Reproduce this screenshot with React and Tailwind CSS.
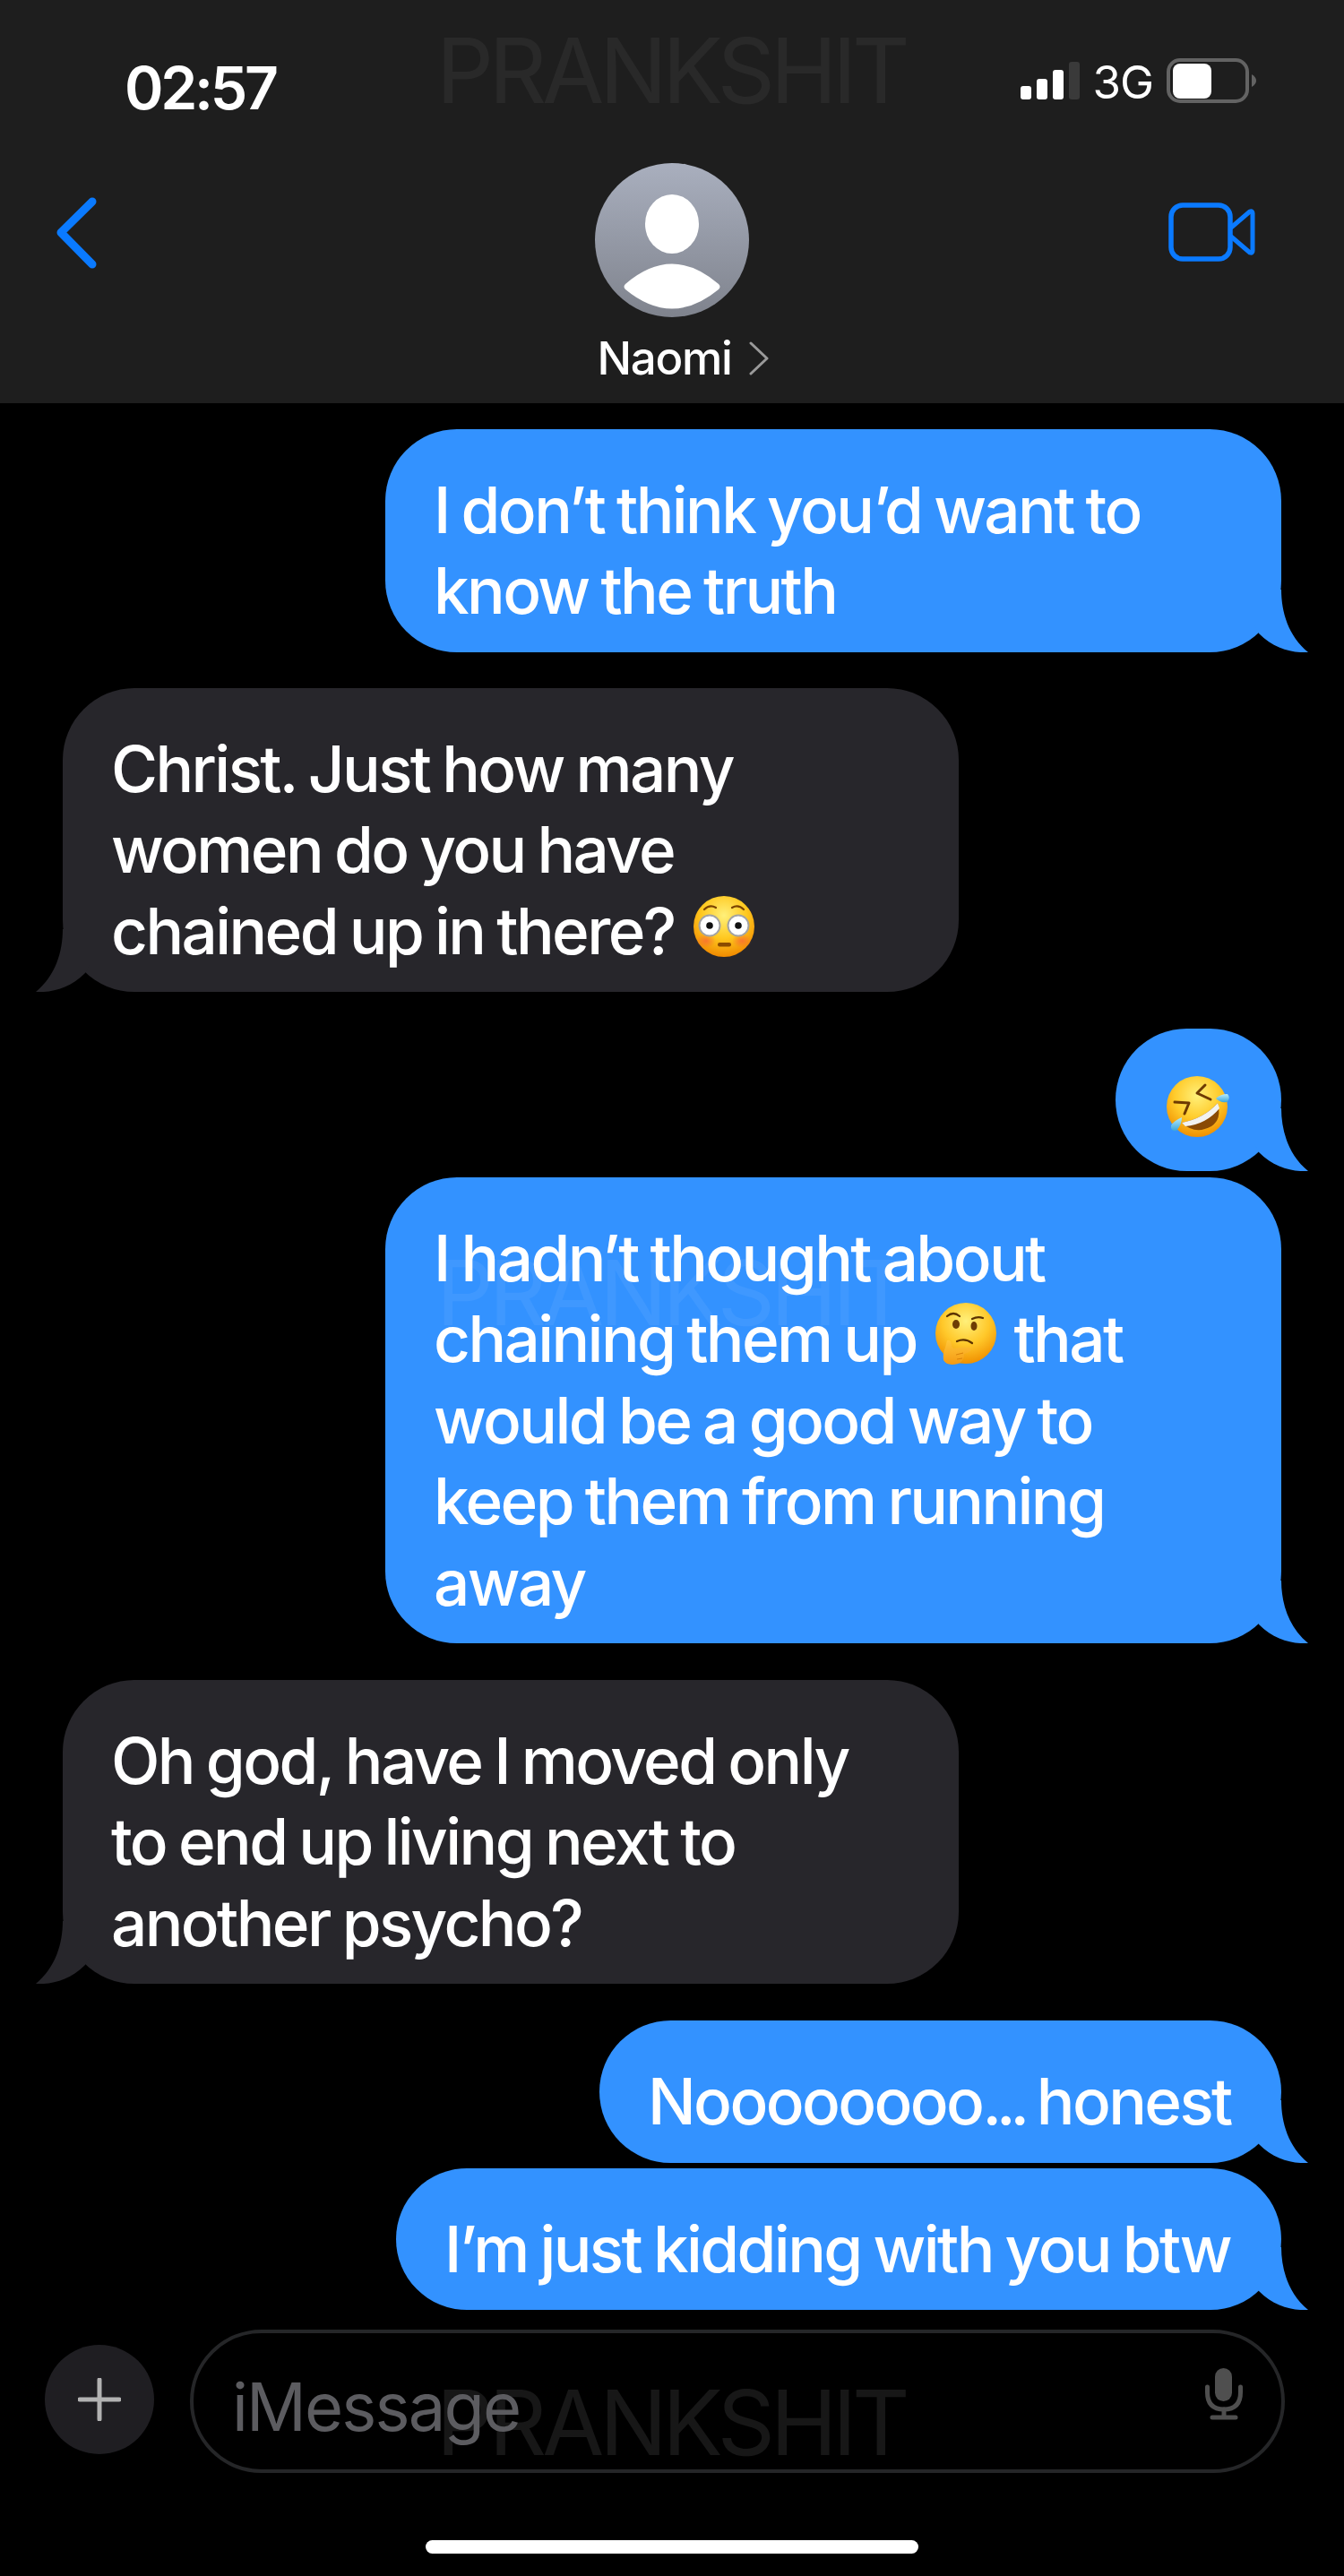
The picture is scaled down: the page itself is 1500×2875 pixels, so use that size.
const Tail = ({ color, flip }) => (
    <svg
        viewBox="0 0 60 70"
        className={`absolute bottom-0 w-[60px] h-[70px] ${flip ? 'left-[-30px] -scale-x-100' : 'right-[-30px]'}`}
    >
        <path d="M0 0 L30 0 C30 25 38 52 60 70 C42 71 22 66 5 49 L0 40 Z" fill={color} />
    </svg>
);

const Flushed = () => (
    <svg viewBox="0 0 68 68" className="inline-block w-[68px] h-[68px] ml-[8px] align-[-3px]">
        <defs>
            <radialGradient id="fl" cx="50%" cy="32%" r="68%">
                <stop offset="0" stopColor="#fff07a" />
                <stop offset="0.55" stopColor="#ffc81f" />
                <stop offset="1" stopColor="#f08a00" />
            </radialGradient>
            <radialGradient id="bl">
                <stop offset="0" stopColor="#f8603a" stopOpacity="0.7" />
                <stop offset="1" stopColor="#f8603a" stopOpacity="0" />
            </radialGradient>
        </defs>
        <circle cx="34" cy="34" r="34" fill="url(#fl)" />
        <ellipse cx="14" cy="50" rx="11" ry="8" fill="url(#bl)" />
        <ellipse cx="54" cy="50" rx="11" ry="8" fill="url(#bl)" />
        <circle cx="18" cy="33" r="11.5" fill="#fff" stroke="#a3a3a3" strokeWidth="2" />
        <circle cx="50" cy="33" r="11.5" fill="#fff" stroke="#a3a3a3" strokeWidth="2" />
        <circle cx="18" cy="33" r="3.8" fill="#111" />
        <circle cx="50" cy="33" r="3.8" fill="#111" />
        <path d="M12 15 Q18 9 25 13" fill="none" stroke="#7a4200" strokeWidth="2.2" strokeLinecap="round" />
        <path d="M43 13 Q50 9 56 15" fill="none" stroke="#7a4200" strokeWidth="2.2" strokeLinecap="round" />
        <rect x="27" y="52" width="15" height="4.5" rx="2.2" fill="#8a4b00" />
    </svg>
);

const Rofl = () => (
    <svg viewBox="0 0 70 68" className="w-[70px] h-[68px]">
        <defs>
            <radialGradient id="ro" cx="50%" cy="32%" r="68%">
                <stop offset="0" stopColor="#fff07a" />
                <stop offset="0.55" stopColor="#ffcb2b" />
                <stop offset="1" stopColor="#f09000" />
            </radialGradient>
            <linearGradient id="tear" x1="0" y1="0" x2="0" y2="1">
                <stop offset="0" stopColor="#b8ecfb" />
                <stop offset="1" stopColor="#3aa5dc" />
            </linearGradient>
        </defs>
        <circle cx="34" cy="34" r="34" fill="url(#ro)" />
        <path d="M17 52 Q42 47 57 30 Q62 48 50 56 Q32 66 17 52 Z" fill="#8a4a05" />
        <path d="M17 52 Q42 47 57 30 L59 36 Q44 54 21 56 Z" fill="#f2f2f2" />
        <path d="M9 29 L25 30 L20 42" fill="none" stroke="#6e3a02" strokeWidth="3" strokeLinecap="round" strokeLinejoin="round" />
        <path d="M43 10 L34 19 L49 26" fill="none" stroke="#6e3a02" strokeWidth="3" strokeLinecap="round" strokeLinejoin="round" />
        <path d="M55 25 Q60 20 68 20 Q72 25 67 29 Q60 30 55 25 Z" fill="url(#tear)" />
        <path d="M17 46 Q17 54 11 61 Q4 62 5 55 Q8 50 17 46 Z" fill="url(#tear)" />
    </svg>
);

const Thinking = () => (
    <svg viewBox="0 0 70 72" className="inline-block w-[70px] h-[72px] ml-[6px] mr-[5px] align-[-6px]">
        <defs>
            <radialGradient id="th" cx="50%" cy="30%" r="70%">
                <stop offset="0" stopColor="#fff07a" />
                <stop offset="0.55" stopColor="#ffc82a" />
                <stop offset="1" stopColor="#f09000" />
            </radialGradient>
            <linearGradient id="hand" x1="0" y1="0" x2="0" y2="1">
                <stop offset="0" stopColor="#ffc63a" />
                <stop offset="1" stopColor="#f59a12" />
            </linearGradient>
        </defs>
        <circle cx="35" cy="34" r="34" fill="url(#th)" />
        <path d="M14 15 Q21 9 28 15" fill="none" stroke="#5c3200" strokeWidth="2.2" strokeLinecap="round" />
        <path d="M42 18 Q48 15 54 17" fill="none" stroke="#5c3200" strokeWidth="2.2" strokeLinecap="round" />
        <ellipse cx="24" cy="24" rx="4" ry="5" fill="#6e3d04" />
        <ellipse cx="44" cy="26" rx="3.5" ry="5" fill="#6e3d04" />
        <path d="M25 43 Q34 39 42 45" fill="none" stroke="#5c3200" strokeWidth="2.2" strokeLinecap="round" />
        <path d="M14 42 Q18 41 19 47 Q19 50 22 51 Q32 49 40 50 Q42 54 36 56 L33 57 Q33 66 26 68 Q14 71 10 64 Q9 56 12 50 Z" fill="url(#hand)" />
        <path d="M24 58 L32 56 M25 63 L31 62" stroke="#d9820a" strokeWidth="1" fill="none" />
    </svg>
);

const Watermark = ({ className }) => (
    <div className={`absolute left-[487px] z-[5] text-[100px] leading-[72px] font-normal tracking-[-0.05em] whitespace-nowrap pointer-events-none ${className}`}>
        PRANKSHIT
    </div>
);

const Bubble = ({ lines, mine, width, className = '' }) => {
    const color = mine ? '#3392ff' : '#27262b';
    return (
        <div
            className={`relative rounded-[80px] pt-[45px] pb-[23px] pl-[54px] text-[71px] leading-[90.4px] font-[450] tracking-[-2.6px] [word-spacing:-2.5px] text-white whitespace-nowrap ${mine ? 'self-end bg-[#3392ff]' : 'self-start bg-[#27262b]'} ${width} ${className}`}
        >
            <Tail color={color} flip={!mine} />
            <div className="relative z-10">
                {lines.map((line, i) => (
                    <div key={i}>{line}</div>
                ))}
            </div>
        </div>
    );
};

const App = () => {
    return (
        <div className="relative w-[1500px] h-[2875px] bg-black overflow-hidden font-[Inter,sans-serif]">
            <Watermark className="top-[43px] text-white/[0.05]" />
            <Watermark className="top-[1407px] text-white/[0.06]" />
            <Watermark className="top-[2668px] text-white/[0.09]" />

            <header className="h-[450px] bg-[#1e1e1e] flex flex-col">
                <div className="flex justify-between items-start pl-[139px] pr-[98px] pt-[53px] h-[181px]">
                    <span className="text-[66px] leading-[90px] font-semibold tracking-[-0.05em] text-white">02:57</span>
                    <div className="flex items-start mt-[12px] text-white">
                        <svg viewBox="0 0 66 42" className="w-[66px] h-[42px] mt-[4px]">
                            <rect x="0" y="27" width="12" height="15" rx="3" fill="#fff" />
                            <rect x="18" y="19" width="12" height="23" rx="3" fill="#fff" />
                            <rect x="36" y="9" width="12" height="33" rx="3" fill="#fff" />
                            <rect x="54" y="0" width="12" height="42" rx="3" fill="#3a3a3a" />
                        </svg>
                        <span className="ml-[14px] mt-[2px] text-[51px] leading-[50px] tracking-[-0.02em]">3G</span>
                        <svg viewBox="0 0 100 50" className="w-[100px] h-[50px] ml-[15px]">
                            <rect x="2" y="2" width="88" height="46" rx="13" fill="none" stroke="#636363" strokeWidth="4" />
                            <rect x="7" y="6" width="43" height="39" rx="8" fill="#fff" />
                            <path d="M95 18 Q100 21 100 25 Q100 29 95 32 Z" fill="#636363" />
                        </svg>
                    </div>
                </div>
                <div className="grid grid-cols-[1fr_172px_1fr] items-start">
                    <svg viewBox="0 0 46 80" className="w-[46px] h-[80px] ml-[62px] mt-[39px]">
                        <path d="M41 5 L6 39.5 L41 75" fill="none" stroke="#0a7aff" strokeWidth="9" strokeLinecap="round" strokeLinejoin="round" />
                    </svg>
                    <div className="flex flex-col items-center">
                        <svg viewBox="0 0 172 172" className="w-[172px] h-[172px] mt-px">
                            <defs>
                                <linearGradient id="av" x1="0" y1="0" x2="0" y2="1">
                                    <stop offset="0" stopColor="#a9afbe" />
                                    <stop offset="1" stopColor="#7f838d" />
                                </linearGradient>
                            </defs>
                            <circle cx="86" cy="86" r="86" fill="url(#av)" />
                            <ellipse cx="86" cy="68" rx="30" ry="33" fill="#fff" />
                            <path d="M34 135 Q86 90 138 135 Q141 138 138 141 Q86 184 34 141 Q31 138 34 135 Z" fill="#fff" />
                        </svg>
                        <div className="flex items-center ml-[24px] mt-[16px] whitespace-nowrap">
                            <span className="text-[51px] leading-[60px] font-[450] tracking-[-0.025em] text-white">Naomi</span>
                            <svg viewBox="0 0 22 38" className="w-[22px] h-[38px] ml-[19px]">
                                <path d="M2 2 L20 19 L2 36" fill="none" stroke="#9a9a9a" strokeWidth="3" strokeLinecap="round" strokeLinejoin="round" />
                            </svg>
                        </div>
                    </div>
                    <svg viewBox="0 0 98 66" className="w-[98px] h-[66px] justify-self-end mr-[98px] mt-[45px]">
                        <rect x="3" y="3" width="66" height="60" rx="13" fill="none" stroke="#0a7aff" strokeWidth="5.5" />
                        <path d="M70 28 L91 10 Q94 9 94 12 L94 54 Q94 57 91 56 L70 38" fill="none" stroke="#0a7aff" strokeWidth="5" strokeLinecap="round" strokeLinejoin="round" />
                    </svg>
                </div>
            </header>

            <main className="flex flex-col px-[70px]">
                <Bubble mine width="w-[1000px]" className="mt-[29px]" lines={['I don’t think you’d want to', 'know the truth']} />
                <Bubble
                    width="w-[1000px]"
                    className="mt-[40px]"
                    lines={['Christ. Just how many', 'women do you have', <>chained up in there? <Flushed /></>]}
                />
                <div className="relative self-end mt-[41px] w-[185px] h-[159px] rounded-[80px] bg-[#3392ff] flex items-center justify-center">
                    <Tail color="#3392ff" />
                    <div className="relative z-10 mt-[14px] ml-[-2px]"><Rofl /></div>
                </div>
                <Bubble
                    mine
                    width="w-[1000px]"
                    className="mt-[7px]"
                    lines={['I hadn’t thought about', <>chaining them up <Thinking /> that</>, 'would be a good way to', 'keep them from running', 'away']}
                />
                <Bubble
                    width="w-[1000px]"
                    className="mt-[41px]"
                    lines={['Oh god, have I moved only', 'to end up living next to', 'another psycho?']}
                />
                <Bubble mine width="w-[761px]" className="mt-[41px]" lines={[<>Noooooooo<span className="tracking-[-6px]">...</span> honest</>]} />
                <Bubble mine width="w-[988px]" className="mt-[6px]" lines={['I’m just kidding with you btw']} />
            </main>

            <div className="flex items-center pl-[50px] pr-[66px] mt-[22px]">
                <div className="w-[122px] h-[122px] rounded-full bg-[#1f1e22] flex items-center justify-center mt-[-4px]">
                    <svg viewBox="0 0 48 48" className="w-[48px] h-[48px]">
                        <path d="M24 2 V46 M2 24 H46" fill="none" stroke="#b2b2b2" strokeWidth="5" strokeLinecap="round" />
                    </svg>
                </div>
                <div className="ml-[40px] flex-1 h-[160px] rounded-[80px] border-4 border-[#252628] flex items-center justify-between pl-[43px] pr-[43px]">
                    <span className="relative z-10 mt-[12px] text-[74px] leading-[90px] tracking-[-0.025em] text-[#5c5c60]">iMessage</span>
                    <svg viewBox="0 0 42 58" className="w-[42px] h-[58px] mt-[-16px]">
                        <rect x="11" y="0" width="19" height="37" rx="9.5" fill="#4f4f4f" />
                        <path d="M2.5 21 V27 Q2.5 46 21 46 Q39.5 46 39.5 27 V21" fill="none" stroke="#4f4f4f" strokeWidth="5" strokeLinecap="round" />
                        <path d="M21 46 V55 M8 55 H34" fill="none" stroke="#4f4f4f" strokeWidth="5" strokeLinecap="round" />
                    </svg>
                </div>
            </div>

            <div className="mt-[75px] mx-auto w-[550px] h-[15px] rounded-full bg-white" />
        </div>
    );
};

export default App;
